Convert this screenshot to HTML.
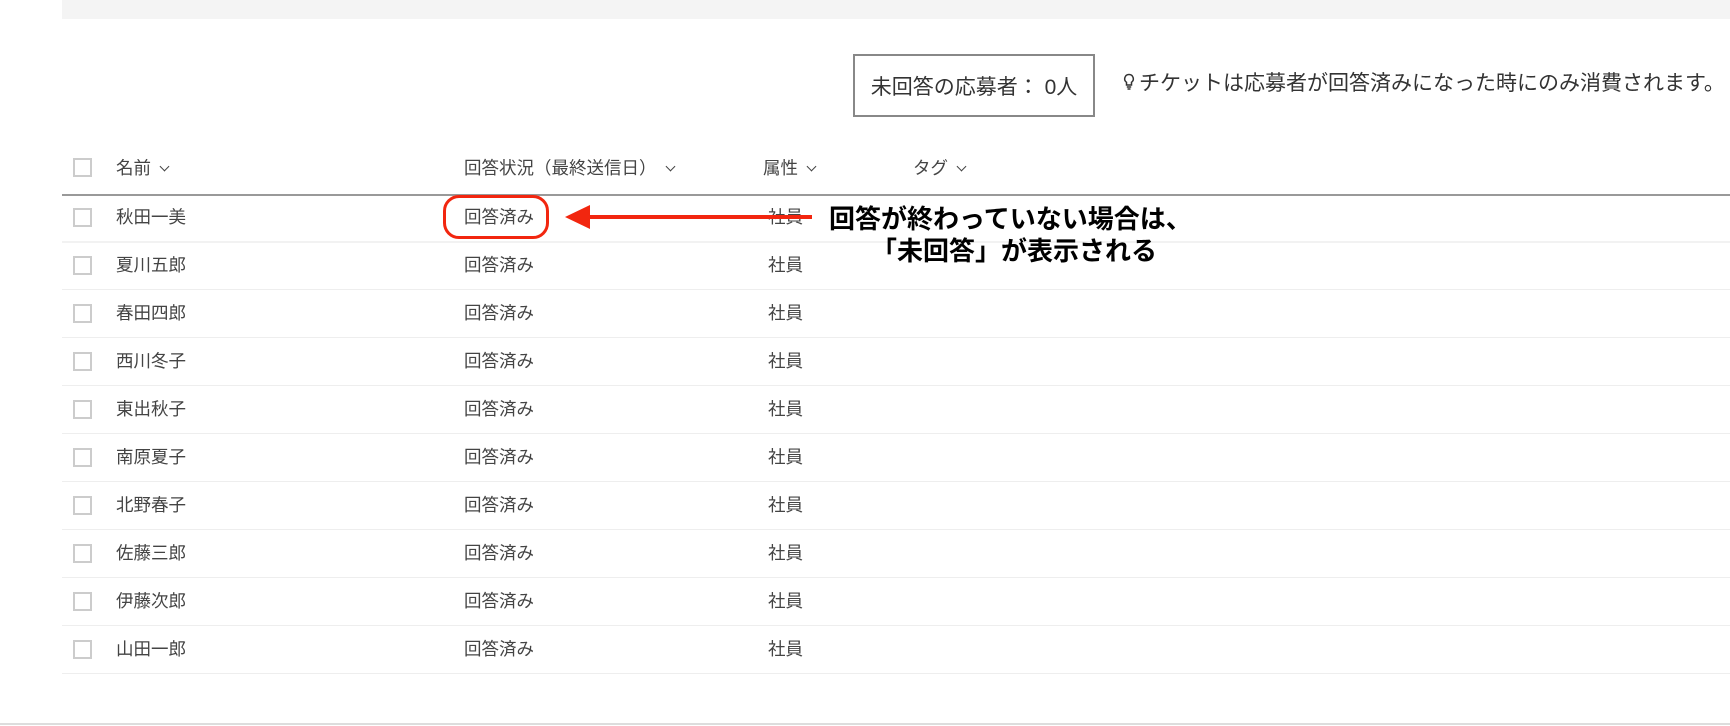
<!DOCTYPE html>
<html><head><meta charset="utf-8"><style>
*{margin:0;padding:0;box-sizing:border-box}
body{width:1730px;height:726px;background:#fff;position:relative;overflow:hidden;font-family:"Liberation Sans","Noto Sans CJK JP",sans-serif;color:#444;font-size:17.5px}
.band{position:absolute;left:62px;top:0;right:0;height:19px;background:#f4f4f4}
.box{position:absolute;left:853px;top:54px;width:242px;height:63px;border:2px solid #888;display:flex;align-items:center;justify-content:center;font-size:21px;color:#333}
.tip{position:absolute;left:1123px;top:71px;font-size:21px;color:#333;white-space:nowrap;line-height:26px}
.cb{position:absolute;left:73px;width:19px;height:19px;border:2px solid #ccc;background:#fff}
.t{position:absolute;white-space:nowrap;line-height:22px}
.line{position:absolute;left:62px;right:0;height:1px;background:#eee}
.chev{display:inline-block;width:7px;height:7px;border-right:1.6px solid #444;border-bottom:1.6px solid #444;transform:rotate(45deg);margin-left:10px;position:relative;top:-4px}
</style></head><body>
<div class="band"></div>
<div class="box">未回答の応募者： 0人</div>
<div class="tip"><svg width="12" height="20" viewBox="0 0 12 18" style="vertical-align:-2px;margin-right:4px"><path d="M6 1.5a4.3 4.3 0 0 0-2.5 7.8V12h5V9.3A4.3 4.3 0 0 0 6 1.5z" fill="none" stroke="#333" stroke-width="1.5"/><path d="M3.8 14h4.4M4.5 16h3" stroke="#333" stroke-width="1.5"/></svg>チケットは応募者が回答済みになった時にのみ消費されます。</div>

<div class="cb" style="top:158px"></div>
<div class="t" style="left:116px;top:157px">名前<span class="chev"></span></div>
<div class="t" style="left:464px;top:157px">回答状況（最終送信日）<span class="chev"></span></div>
<div class="t" style="left:763px;top:157px">属性<span class="chev"></span></div>
<div class="t" style="left:913px;top:157px">タグ<span class="chev"></span></div>
<div style="position:absolute;left:62px;right:0;top:194px;height:2px;background:#999"></div>

<div id="rows"></div>
<script>
var n=["秋田一美","夏川五郎","春田四郎","西川冬子","東出秋子","南原夏子","北野春子","佐藤三郎","伊藤次郎","山田一郎"],h="";
for(var i=0;i<10;i++){var c=217+i*48;
h+='<div class="cb" style="top:'+(c-9)+'px"></div><div class="t" style="left:116px;top:'+(c-11)+'px">'+n[i]+'</div><div class="t" style="left:464px;top:'+(c-11)+'px">回答済み</div><div class="t" style="left:768px;top:'+(c-11)+'px">社員</div><div class="line" style="top:'+(c+24)+'px;'+(i==0?'height:2px;background:#f2f2f2':'')+'"></div>';}
document.getElementById('rows').innerHTML=h;
</script>
<div style="position:absolute;left:0;right:0;top:723px;height:2px;background:#ddd"></div>

<div style="position:absolute;left:443px;top:195px;width:106px;height:44px;border:3px solid #f2260f;border-radius:16px"></div>
<svg style="position:absolute;left:560px;top:203px" width="255" height="28"><path d="M5 14 L30 2 L30 26 Z" fill="#f2260f"/><rect x="28" y="12" width="224" height="4" fill="#f2260f"/></svg>
<div class="t" style="left:829px;top:204px;font-size:26px;font-weight:bold;color:#000;line-height:30px">回答が終わっていない場合は、</div>
<div class="t" style="left:871px;top:236px;font-size:26px;font-weight:bold;color:#000;line-height:30px">「未回答」が表示される</div>
</body></html>
